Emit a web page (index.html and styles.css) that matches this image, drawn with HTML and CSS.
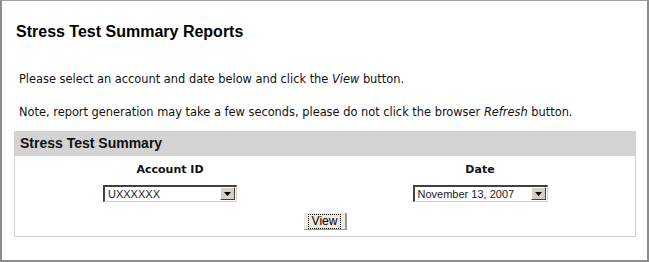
FILE: index.html
```html
<!DOCTYPE html>
<html lang="en">
<head>
    <meta charset="UTF-8">
    <title>Stress Test Summary Reports</title>
    <link rel="stylesheet" href="styles.css">
</head>
<body>
    <div class="page">
        <h1>Stress Test Summary Reports</h1>
        <p class="note">Please select an account and date below and click the <em>View</em> button.</p>
        <p class="note second">Note, report generation may take a few seconds, please do not click the browser <em>Refresh</em> button.</p>

        <div class="panel">
            <div class="panel-head">Stress Test Summary</div>
            <div class="panel-body">
                <div class="fields">
                    <div class="field">
                        <label>Account ID</label>
                        <div class="combo account">
                            <span class="combo-value">UXXXXXX</span>
                            <span class="combo-arrow">
                                <svg width="7" height="4" viewBox="0 0 7 4"><polygon points="0,0 7,0 3.5,4" fill="#000"/></svg>
                            </span>
                        </div>
                    </div>
                    <div class="field">
                        <label>Date</label>
                        <div class="combo date">
                            <span class="combo-value">November 13, 2007</span>
                            <span class="combo-arrow">
                                <svg width="7" height="4" viewBox="0 0 7 4"><polygon points="0,0 7,0 3.5,4" fill="#000"/></svg>
                            </span>
                        </div>
                    </div>
                </div>
                <div class="actions">
                    <button class="view-btn" type="button"><span>View</span></button>
                </div>
            </div>
        </div>
    </div>
</body>
</html>
```

FILE: styles.css
```css
        body {
            margin: 0;
            padding: 0;
            background-color: #fff;
            color: #000;
        }
        .page {
            width: 649px;
            height: 262px;
            box-sizing: border-box;
            border: 1px solid #a0a0a0;
            border-left: 2px solid #8c8c8c;
            border-right: 2px solid #8c8c8c;
            border-bottom: 2px solid #8c8c8c;
            padding: 0 0 0 12px;
        }
        h1 {
            margin: 21px 0 0 2px;
            font-family: 'Liberation Sans', Arial, sans-serif;
            font-size: 16px;
            line-height: 20px;
            font-weight: bold;
        }
        .note {
            margin: 30px 0 0 5px;
            font-family: 'DejaVu Sans', Verdana, sans-serif;
            font-size: 11.4px;
            line-height: 14px;
            color: #111;
        }
        .note.second {
            margin-top: 19px;
        }
        .panel {
            margin-top: 12px;
            width: 622px;
            box-sizing: border-box;
            border: 1px solid #d3d3d3;
        }
        .panel-head {
            background-color: #d3d3d3;
            height: 25px;
            line-height: 25px;
            margin: -1px -1px 0 -1px;
            padding: 0 0 0 6px;
            font-family: 'Liberation Sans', Arial, sans-serif;
            font-size: 14px;
            font-weight: bold;
            color: #111;
        }
        .panel-body {
            padding: 7px 0 6px 0;
        }
        .fields {
            display: grid;
            grid-template-columns: 1fr 1fr;
        }
        .field {
            display: flex;
            flex-direction: column;
            align-items: center;
            gap: 8px;
        }
        .field label {
            font-family: 'DejaVu Sans', Verdana, sans-serif;
            font-size: 11px;
            line-height: 14px;
            font-weight: bold;
            color: #111;
        }
        .combo {
            display: flex;
            height: 17px;
            box-sizing: border-box;
            border-top: 2px solid #404040;
            border-left: 2px solid #404040;
            border-right: 1px solid #d4d0c8;
            border-bottom: 1px solid #d4d0c8;
            background-color: #fff;
        }
        .combo.account {
            width: 134px;
        }
        .combo.date {
            width: 135px;
        }
        .combo-value {
            flex: 1;
            padding-left: 3px;
            font-family: 'Liberation Sans', Arial, sans-serif;
            font-size: 11px;
            line-height: 14px;
            color: #222;
        }
        .combo-arrow {
            width: 15px;
            margin: 0 1px 1px 0;
            box-sizing: border-box;
            background-color: #d4d0c8;
            border-top: 1px solid #fff;
            border-left: 1px solid #fff;
            border-right: 1px solid #404040;
            border-bottom: 1px solid #404040;
            display: flex;
            align-items: center;
            justify-content: center;
        }
        .actions {
            display: flex;
            justify-content: center;
            margin-top: 11px;
        }
        .view-btn {
            height: 17px;
            padding: 1px 5px;
            margin-left: 1px;
            background-color: #ece9e4;
            border: none;
            border-right: 2px solid #9a9a9a;
            border-bottom: 1px solid #9a9a9a;
            font-family: 'Liberation Sans', Arial, sans-serif;
            font-size: 12px;
            line-height: 13px;
            color: #000;
            cursor: pointer;
        }
        .view-btn span {
            display: block;
            padding: 0 3px;
            outline: 1px dotted #000;
        }
```
